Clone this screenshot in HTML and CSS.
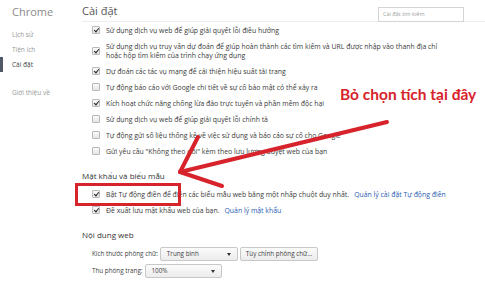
FILE: index.html
```html
<!DOCTYPE html>
<html lang="vi">
<head>
  <meta charset="UTF-8">
  <title>Cài đặt</title>
  <link rel="stylesheet" href="styles.css">
</head>
<body>
  <div class="page">
    <nav class="nav">
      <h1>Chrome</h1>
      <ul class="nav-list">
        <li>Lịch sử</li>
        <li>Tiện ích</li>
        <li class="active">Cài đặt</li>
      </ul>
      <div class="nav-about">Giới thiệu về</div>
    </nav>

    <main class="main">
      <header class="header">
        <h2>Cài đặt</h2>
        <div class="search">Cài đặt tìm kiếm</div>
      </header>

      <div class="options">
        <div class="row"><span class="cb checked"></span><span>Sử dụng dịch vụ web để giúp giải quyết lỗi điều hướng</span></div>
        <div class="row tall"><span class="cb checked"></span><span>Sử dụng dịch vụ truy vấn dự đoán để giúp hoàn thành các tìm kiếm và URL được nhập vào thanh địa chỉ<br>hoặc hộp tìm kiếm của trình chạy ứng dụng</span></div>
        <div class="row"><span class="cb checked"></span><span>Dự đoán các tác vụ mạng để cải thiện hiệu suất tải trang</span></div>
        <div class="row"><span class="cb"></span><span>Tự động báo cáo với Google chi tiết về sự cố bảo mật có thể xảy ra</span></div>
        <div class="row"><span class="cb checked"></span><span>Kích hoạt chức năng chống lừa đảo trực tuyến và phần mềm độc hại</span></div>
        <div class="row"><span class="cb"></span><span>Sử dụng dịch vụ web để giúp giải quyết lỗi chính tả</span></div>
        <div class="row"><span class="cb"></span><span>Tự động gửi số liệu thống kê về việc sử dụng và báo cáo sự cố cho Google</span></div>
        <div class="row"><span class="cb"></span><span>Gửi yêu cầu "Không theo dõi" kèm theo lưu lượng duyệt web của bạn</span></div>
      </div>

      <h3 class="section-title">Mật khẩu và biểu mẫu</h3>
      <div class="options">
        <div class="row"><span class="cb checked"></span><span>Bật Tự động điền để điền các biểu mẫu web bằng một nhấp chuột duy nhất.</span><a class="link">Quản lý cài đặt Tự động điền</a></div>
        <div class="row"><span class="cb checked"></span><span>Đề xuất lưu mật khẩu web của bạn.</span><a class="link">Quản lý mật khẩu</a></div>
      </div>

      <h3 class="section-title">Nội dung web</h3>
      <div class="form-row">
        <span class="label">Kích thước phông chữ:</span>
        <span class="select size-select">Trung bình</span>
        <span class="button">Tùy chỉnh phông chữ...</span>
      </div>
      <div class="form-row">
        <span class="label">Thu phóng trang:</span>
        <span class="select zoom-select">100%</span>
      </div>
    </main>
  </div>

  <!-- annotation drawn over the screenshot -->
  <div class="note">Bỏ chọn tích tại đây</div>
  <svg class="marks" width="485" height="286" viewBox="0 0 485 286">
    <rect x="76.5" y="184.5" width="103" height="20" fill="none" stroke="#d7232b" stroke-width="3"/>
    <g stroke="#d7232b" stroke-width="4" stroke-linecap="round" fill="none">
      <line x1="387" y1="122" x2="180" y2="172"/>
      <line x1="180" y1="172" x2="198" y2="137"/>
      <line x1="180" y1="172" x2="222" y2="186"/>
    </g>
  </svg>
</body>
</html>
```

FILE: styles.css
```css
body {
  margin: 0;
  width: 485px;
  height: 286px;
  overflow: hidden;
  background-color: #FFFFFF;
  font-family: 'Open Sans', sans-serif;
  color: #3a3a3a;
  position: relative;
}

.page {
  display: flex;
  height: 286px;
}

/* Left navigation */
.nav {
  width: 82px;
  flex-shrink: 0;
}

.nav h1 {
  margin: 5px 0 0 12px;
  font-size: 11px;
  font-weight: normal;
  line-height: 14px;
  color: #8a8a8a;
}

.nav-list {
  list-style: none;
  margin: 8px 0 0 0;
  padding: 0;
}

.nav-list li {
  height: 15px;
  line-height: 15px;
  padding-left: 12px;
  font-size: 6.5px;
  color: #999999;
  border-left: 3px solid transparent;
  margin-left: -3px;
}

.nav-list li.active {
  color: #444444;
  border-left: 3px solid #505a66;
  margin-left: 0;
  padding-left: 9px;
}

.nav-about {
  margin-top: 16px;
  padding-left: 12px;
  font-size: 6.5px;
  color: #999999;
}

/* Main column */
.main {
  flex: 1;
  min-width: 0;
}

.header {
  display: flex;
  align-items: center;
  justify-content: space-between;
  height: 21px;
  border-bottom: 1px solid #eeeeee;
}

.header h2 {
  margin: 0;
  font-size: 11px;
  font-weight: normal;
  color: #555555;
}

.search {
  width: 80px;
  height: 13px;
  margin-right: 21px;
  margin-top: 7px;
  border: 1px solid #d4d4d4;
  font-size: 5.5px;
  line-height: 13px;
  padding-left: 4px;
  color: #a0a0a0;
}

.options {
  padding-left: 10px;
}

.row {
  display: flex;
  align-items: center;
  height: 16px;
  font-size: 6.9px;
  line-height: 9px;
  white-space: nowrap;
}

.row.tall {
  height: 25px;
}

.cb {
  width: 6px;
  height: 6px;
  flex-shrink: 0;
  margin-right: 6px;
  border: 1px solid #b8b8b8;
  border-radius: 1px;
  background: linear-gradient(#fafafa, #e6e6e6);
  position: relative;
}

.cb.checked::after {
  content: '';
  position: absolute;
  left: 2px;
  top: 0;
  width: 2px;
  height: 4px;
  border: solid #222222;
  border-width: 0 1.4px 1.4px 0;
  transform: rotate(40deg);
}

.link {
  margin-left: 5px;
  color: #2a5bb0;
}

.section-title {
  margin: 11px 0 4px 0;
  height: 12px;
  line-height: 12px;
  font-size: 8px;
  font-weight: normal;
  color: #333333;
}

.form-row {
  display: flex;
  align-items: center;
  height: 17px;
  padding-left: 10px;
  font-size: 6.3px;
  color: #444444;
}

.label {
  margin-right: 2px;
}

.select {
  position: relative;
  height: 14px;
  line-height: 12px;
  padding-left: 6px;
  border: 1px solid #c8c8c8;
  border-radius: 2px;
  background: linear-gradient(#fbfbfb, #ececec);
  box-sizing: border-box;
}

.select::after {
  content: '';
  position: absolute;
  right: 6px;
  top: 5px;
  border-left: 2.5px solid transparent;
  border-right: 2.5px solid transparent;
  border-top: 3px solid #333333;
}

.size-select {
  width: 78px;
}

.zoom-select {
  width: 77px;
}

.button {
  margin-left: 2px;
  height: 14px;
  line-height: 12px;
  box-sizing: border-box;
  padding: 0 5px;
  border: 1px solid #c8c8c8;
  border-radius: 2px;
  background: linear-gradient(#fbfbfb, #ececec);
}

/* Annotation */
.note {
  position: absolute;
  left: 340px;
  top: 85px;
  font-family: 'Lato', sans-serif;
  font-weight: bold;
  font-size: 15.5px;
  color: #d7232b;
  white-space: nowrap;
}

.marks {
  position: absolute;
  left: 0;
  top: 0;
}
```
